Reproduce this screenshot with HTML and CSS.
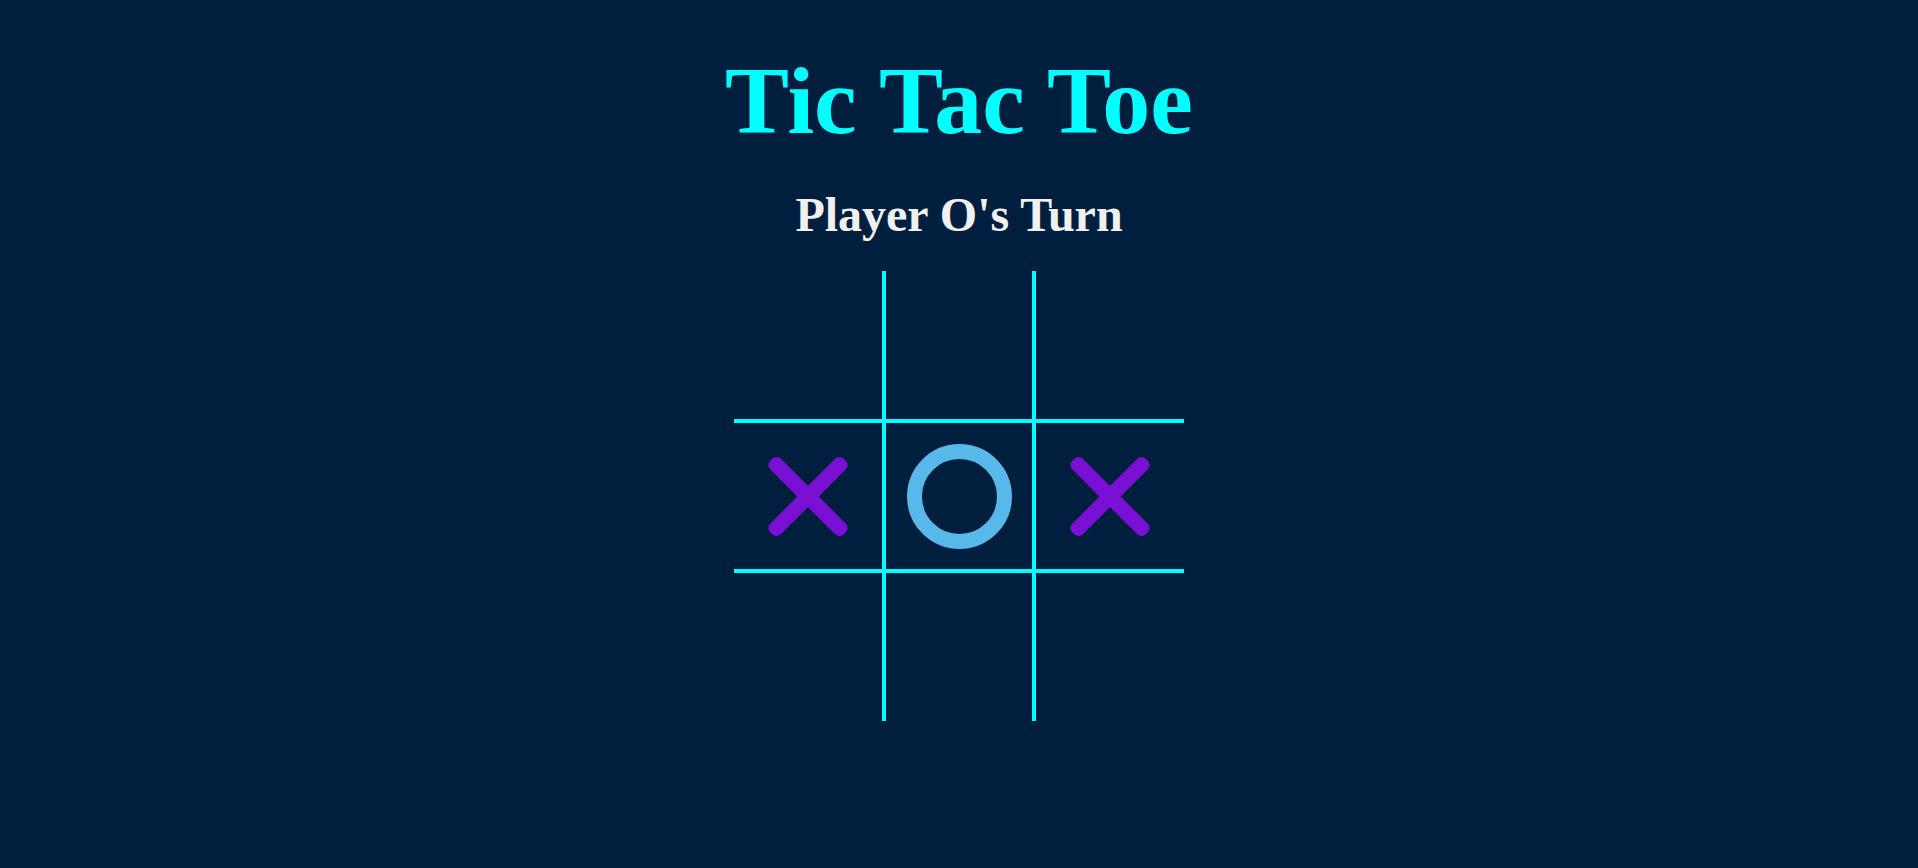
FILE: index.html
```html
<!DOCTYPE html>
<html lang="en">
<head>
<meta charset="utf-8">
<title>Tic Tac Toe</title>
<link rel="stylesheet" href="styles.css">
</head>
<body>
  <main class="game">
    <h1 class="title">Tic Tac Toe</h1>
    <h2 class="status">Player O's Turn</h2>
    <div class="board">
      <div class="cell"></div>
      <div class="cell"></div>
      <div class="cell"></div>
      <div class="cell"><span class="mark-x"></span></div>
      <div class="cell"><span class="mark-o"></span></div>
      <div class="cell"><span class="mark-x"></span></div>
      <div class="cell"></div>
      <div class="cell"></div>
      <div class="cell"></div>
    </div>
  </main>
</body>
</html>
```

FILE: styles.css
```css
html, body {
  margin: 0;
  padding: 0;
  height: 100%;
}

body {
  background: #001f3f;
  font-family: "Liberation Serif", "Times New Roman", serif;
  overflow: hidden;
}

.game {
  display: flex;
  flex-direction: column;
  align-items: center;
}

.title {
  margin: 45px 0 0;
  font-size: 96px;
  font-weight: bold;
  line-height: normal;
  color: #00ffff;
}

.status {
  margin: 31px 0 0;
  font-size: 48px;
  font-weight: bold;
  line-height: normal;
  color: #f0f0f0;
}

.board {
  margin-top: 29px;
  display: grid;
  grid-template-columns: repeat(3, 150px);
  grid-template-rows: repeat(3, 150px);
}

.cell {
  box-sizing: border-box;
  border: 2px solid #00ffff;
  display: flex;
  align-items: center;
  justify-content: center;
}

.cell:nth-child(-n+3) { border-top: none; }
.cell:nth-child(n+7) { border-bottom: none; }
.cell:nth-child(3n+1) { border-left: none; }
.cell:nth-child(3n) { border-right: none; }

.mark-x {
  position: relative;
  width: 104px;
  height: 104px;
}

.mark-x::before,
.mark-x::after {
  content: "";
  position: absolute;
  left: 0;
  top: 44.5px;
  width: 104px;
  height: 15px;
  border-radius: 6px;
  background: #7a10d4;
}

.mark-x::before { transform: rotate(45deg); }
.mark-x::after { transform: rotate(-45deg); }

.mark-o {
  width: 75px;
  height: 75px;
  border: 15px solid #58b8ea;
  border-radius: 50%;
}
```
